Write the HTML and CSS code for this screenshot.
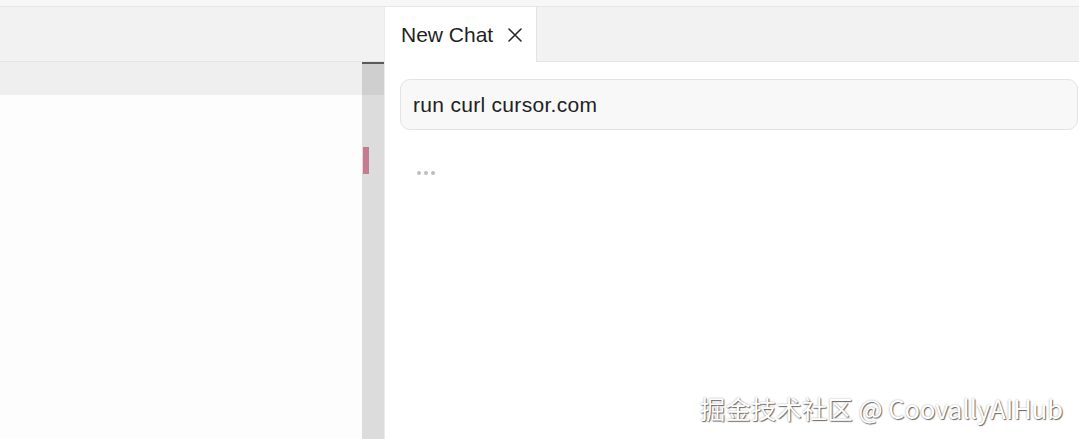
FILE: index.html
```html
<!DOCTYPE html>
<html lang="en">
<head>
  <meta charset="UTF-8">
  <meta name="viewport" content="width=device-width, initial-scale=1.0">
  <title>New Chat</title>
  <link rel="stylesheet" href="styles.css">
</head>
<body>
  <div class="title-strip"></div>

  <div class="workspace">
    <div class="editor">
      <div class="tab-bar"></div>
      <div class="editor-body">
        <div class="code">
          <div class="code-header"></div>
          <div class="code-lines"></div>
        </div>
        <div class="scrollbar">
          <div class="scrollbar-thumb"></div>
          <div class="scrollbar-mark"></div>
        </div>
      </div>
    </div>

    <div class="chat">
      <div class="tab-bar">
        <div class="tab">
          <span class="tab-label">New Chat</span>
          <svg class="tab-close" width="16" height="16" viewBox="0 0 16 16">
            <path d="M2 2 L14 14 M14 2 L2 14" stroke="#2a2a2a" stroke-width="1.6" stroke-linecap="round"/>
          </svg>
        </div>
      </div>
      <div class="chat-body">
        <div class="prompt">run curl cursor.com</div>
        <div class="thinking">
          <span></span><span></span><span></span>
        </div>
      </div>
    </div>
  </div>

  <div class="watermark">掘金技术社区 @ CoovallyAIHub</div>
</body>
</html>
```

FILE: styles.css
```css
body {
  margin: 0;
  height: 100vh;
  overflow: hidden;
  font-family: "Liberation Sans", Arial, sans-serif;
  background-color: #fdfdfd;
  display: flex;
  flex-direction: column;
}
.title-strip {
  height: 6px;
  background-color: #f7f7f7;
  border-bottom: 1px solid #e6e6e6;
  flex-shrink: 0;
}
.workspace {
  flex: 1;
  display: flex;
}
.tab-bar {
  height: 54px;
  background-color: #f2f2f2;
  border-bottom: 1px solid #e4e4e4;
  display: flex;
}

/* left editor column */
.editor {
  width: 384px;
  display: flex;
  flex-direction: column;
}
.editor-body {
  flex: 1;
  display: flex;
}
.code {
  flex: 1;
  display: flex;
  flex-direction: column;
}
.code-header {
  height: 33px;
  background-color: #efefef;
}
.code-lines {
  flex: 1;
  background-color: #fdfdfd;
}
.scrollbar {
  width: 22px;
  background-color: #dcdcdc;
  position: relative;
}
.scrollbar-thumb {
  height: 31px;
  background-color: #cfcfcf;
  border-top: 2px solid #5a5a5a;
}
.scrollbar-mark {
  position: absolute;
  left: 1px;
  top: 85px;
  width: 6px;
  height: 27px;
  background-color: #c77b91;
}

/* chat column */
.chat {
  flex: 1;
  display: flex;
  flex-direction: column;
  border-left: 1px solid #ececec;
}
.tab {
  width: 152px;
  height: 55px;
  background-color: #ffffff;
  border-right: 1px solid #e4e4e4;
  box-sizing: border-box;
  display: flex;
  align-items: center;
  padding: 0 0 0 16px;
  gap: 14px;
}
.tab-label {
  font-size: 21px;
  color: #1f1f1f;
}
.chat-body {
  flex: 1;
  background-color: #ffffff;
  padding: 17px 1px 0 15px;
}
.prompt {
  height: 51px;
  box-sizing: border-box;
  border: 1px solid #e3e3e3;
  border-radius: 10px;
  background-color: #f8f8f8;
  padding: 1px 12px 0;
  display: flex;
  align-items: center;
  font-size: 21px;
  letter-spacing: 0.3px;
  color: #222222;
}
.thinking {
  display: flex;
  gap: 3px;
  padding: 41px 0 0 17px;
}
.thinking span {
  width: 4px;
  height: 4px;
  border-radius: 50%;
  background-color: #bdbdbd;
}

/* site watermark over the page */
.watermark {
  position: absolute;
  right: 16px;
  bottom: 13px;
  font-family: "Noto Sans CJK SC", "Noto Sans", sans-serif;
  font-size: 25.5px;
  color: #ffffff;
  text-shadow: 1px 1px 1px rgba(0, 0, 0, 0.55), 0 0 2px rgba(0, 0, 0, 0.35);
}
```
